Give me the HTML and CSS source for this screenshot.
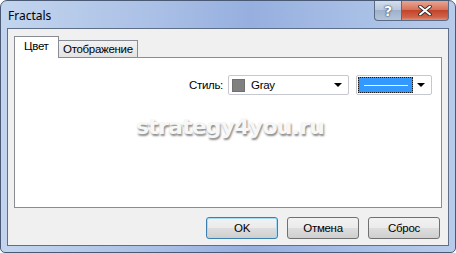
FILE: index.html
```html
<!DOCTYPE html>
<html lang="ru">
<head>
    <meta charset="UTF-8">
    <title>Fractals</title>
    <link rel="stylesheet" href="styles.css">
</head>
<body>
    <div class="window">
        <div class="titlebar">
            <span class="title">Fractals</span>
            <div class="caption-btns">
                <div class="cap-btn help">?</div>
                <div class="cap-btn close">
                    <svg width="14" height="11" viewBox="0 0 14 11">
                        <path d="M2 1.5 L12 9.5 M12 1.5 L2 9.5" stroke="#2a2a2a" stroke-width="3.6" stroke-linecap="round"/>
                        <path d="M2 1.5 L12 9.5 M12 1.5 L2 9.5" stroke="#ffffff" stroke-width="2" stroke-linecap="round"/>
                    </svg>
                </div>
            </div>
        </div>

        <div class="client">
            <div class="tabs">
                <div class="tab active">Цвет</div>
                <div class="tab">Отображение</div>
            </div>
            <div class="panel">
                <div class="style-row">
                    <span class="label">Стиль:</span>
                    <div class="combo color-combo">
                        <span class="swatch"></span>
                        <span class="combo-text">Gray</span>
                        <span class="arrow"></span>
                    </div>
                    <div class="combo line-combo">
                        <span class="line-sel"><span class="line"></span></span>
                        <span class="arrow"></span>
                    </div>
                </div>
                <div class="watermark">strategy4you.ru</div>
            </div>
            <div class="buttons">
                <button class="btn default">OK</button>
                <button class="btn">Отмена</button>
                <button class="btn">Сброс</button>
            </div>
        </div>
    </div>
</body>
</html>
```

FILE: styles.css
```css
html, body {
    margin: 0;
    padding: 0;
    background: #ffffff;
}
.window {
    box-sizing: border-box;
    width: 456px;
    height: 253px;
    border: 1px solid #4a5a75;
    border-radius: 7px 7px 5px 5px;
    background: linear-gradient(90deg, #c3d5ee 0%, #a9bfe5 35%, #96afdf 55%, #a9c0e6 80%, #b7cbeb 100%);
    padding: 0 6px 6px 6px;
    display: flex;
    flex-direction: column;
    font-family: "Liberation Sans", Arial, sans-serif;
    font-size: 11.5px;
    letter-spacing: -0.3px;
    color: #000;
}
.titlebar {
    height: 27px;
    display: flex;
    justify-content: space-between;
    align-items: flex-start;
}
.title {
    font-family: "Noto Sans", "Open Sans", sans-serif;
    font-size: 12px;
    letter-spacing: 0;
    margin-top: 6px;
    padding-left: 1px;
    color: #000;
}
.caption-btns {
    display: flex;
}
.cap-btn {
    box-sizing: border-box;
    height: 20px;
    border: 1px solid #5b6b86;
    border-top: none;
    display: flex;
    align-items: center;
    justify-content: center;
}
.help {
    width: 28px;
    border-radius: 0 0 0 4px;
    background: linear-gradient(#d4deec 0%, #b8c8de 45%, #9fb1cb 50%, #b4c4da 100%);
    color: #fff;
    font-family: "DejaVu Sans", sans-serif;
    font-weight: bold;
    font-size: 14px;
    text-shadow: 0 0 2px #2a3a50, 0 0 1px #2a3a50;
}
.close {
    width: 47px;
    border-left: none;
    border-radius: 0 0 4px 0;
    background: linear-gradient(#e8a593 0%, #d7735b 45%, #c2452a 50%, #d0634a 85%, #e0907a 100%);
}
.client {
    flex: 1;
    border: 1px solid #5f6f88;
    background: #f0f0f0;
    padding: 7px 7px 0 6px;
    display: flex;
    flex-direction: column;
}
.tabs {
    display: flex;
    align-items: flex-end;
    height: 21px;
    position: relative;
    z-index: 1;
}
.tab {
    box-sizing: border-box;
    height: 17px;
    padding: 0 4px;
    border: 1px solid #898c95;
    border-bottom: none;
    background: linear-gradient(#f2f2f2, #e3e3e3);
    line-height: 16px;
    margin-left: -1px;
}
.tab.active {
    height: 22px;
    margin-bottom: -1px;
    margin-left: 0;
    width: 45px;
    padding: 0 0 0 9px;
    background: #ffffff;
    line-height: 18px;
    z-index: 2;
    position: relative;
}
.panel {
    box-sizing: border-box;
    height: 151px;
    width: 428px;
    border: 1px solid #898c95;
    background: #ffffff;
    display: flex;
    flex-direction: column;
}
.style-row {
    display: flex;
    justify-content: flex-end;
    align-items: center;
    margin-top: 17px;
    padding-right: 9px;
}
.label {
    margin-right: 5px;
}
.combo {
    box-sizing: border-box;
    height: 20px;
    border: 1px solid #c5c8cf;
    border-radius: 2px;
    background: #ffffff;
    display: flex;
    align-items: center;
    position: relative;
}
.color-combo {
    width: 121px;
    margin-right: 7px;
}
.swatch {
    box-sizing: border-box;
    width: 13px;
    height: 13px;
    margin-left: 3px;
    background: #808080;
    border: 1px solid #707070;
}
.combo-text {
    margin-left: 6px;
}
.arrow {
    position: absolute;
    right: 6px;
    top: 7px;
    width: 0;
    height: 0;
    border-left: 4px solid transparent;
    border-right: 4px solid transparent;
    border-top: 4px solid #000;
}
.line-combo {
    width: 76px;
}
.line-sel {
    box-sizing: border-box;
    width: 55px;
    height: 16px;
    margin-left: 1px;
    background: #3399ff;
    border: 1px dotted #1a1a1a;
    display: flex;
    align-items: center;
    justify-content: center;
}
.line {
    width: 44px;
    height: 1px;
    background: #ffffff;
}
.watermark {
    margin-top: 19px;
    text-align: center;
    font-family: "DejaVu Sans", sans-serif;
    font-size: 22px;
    font-weight: 600;
    letter-spacing: -0.8px;
    color: #f7f7f7;
    text-shadow: 1px 2px 2px #8a8a8a;
    padding-left: 4px;
}
.buttons {
    display: flex;
    justify-content: flex-end;
    gap: 9px;
    margin-top: 9px;
    padding-right: 1px;
}
.btn {
    box-sizing: border-box;
    width: 72px;
    height: 22px;
    border: 1px solid #707070;
    border-radius: 3px;
    background: linear-gradient(#f2f2f2 0%, #ebebeb 48%, #dddddd 52%, #cfcfcf 100%);
    font-family: "Liberation Sans", Arial, sans-serif;
    font-size: 11.5px;
    letter-spacing: -0.3px;
    color: #000;
    padding: 0;
}
.btn.default {
    border-color: #3c7fb1;
    box-shadow: inset 0 0 0 1px #a6dcf6;
}
```
